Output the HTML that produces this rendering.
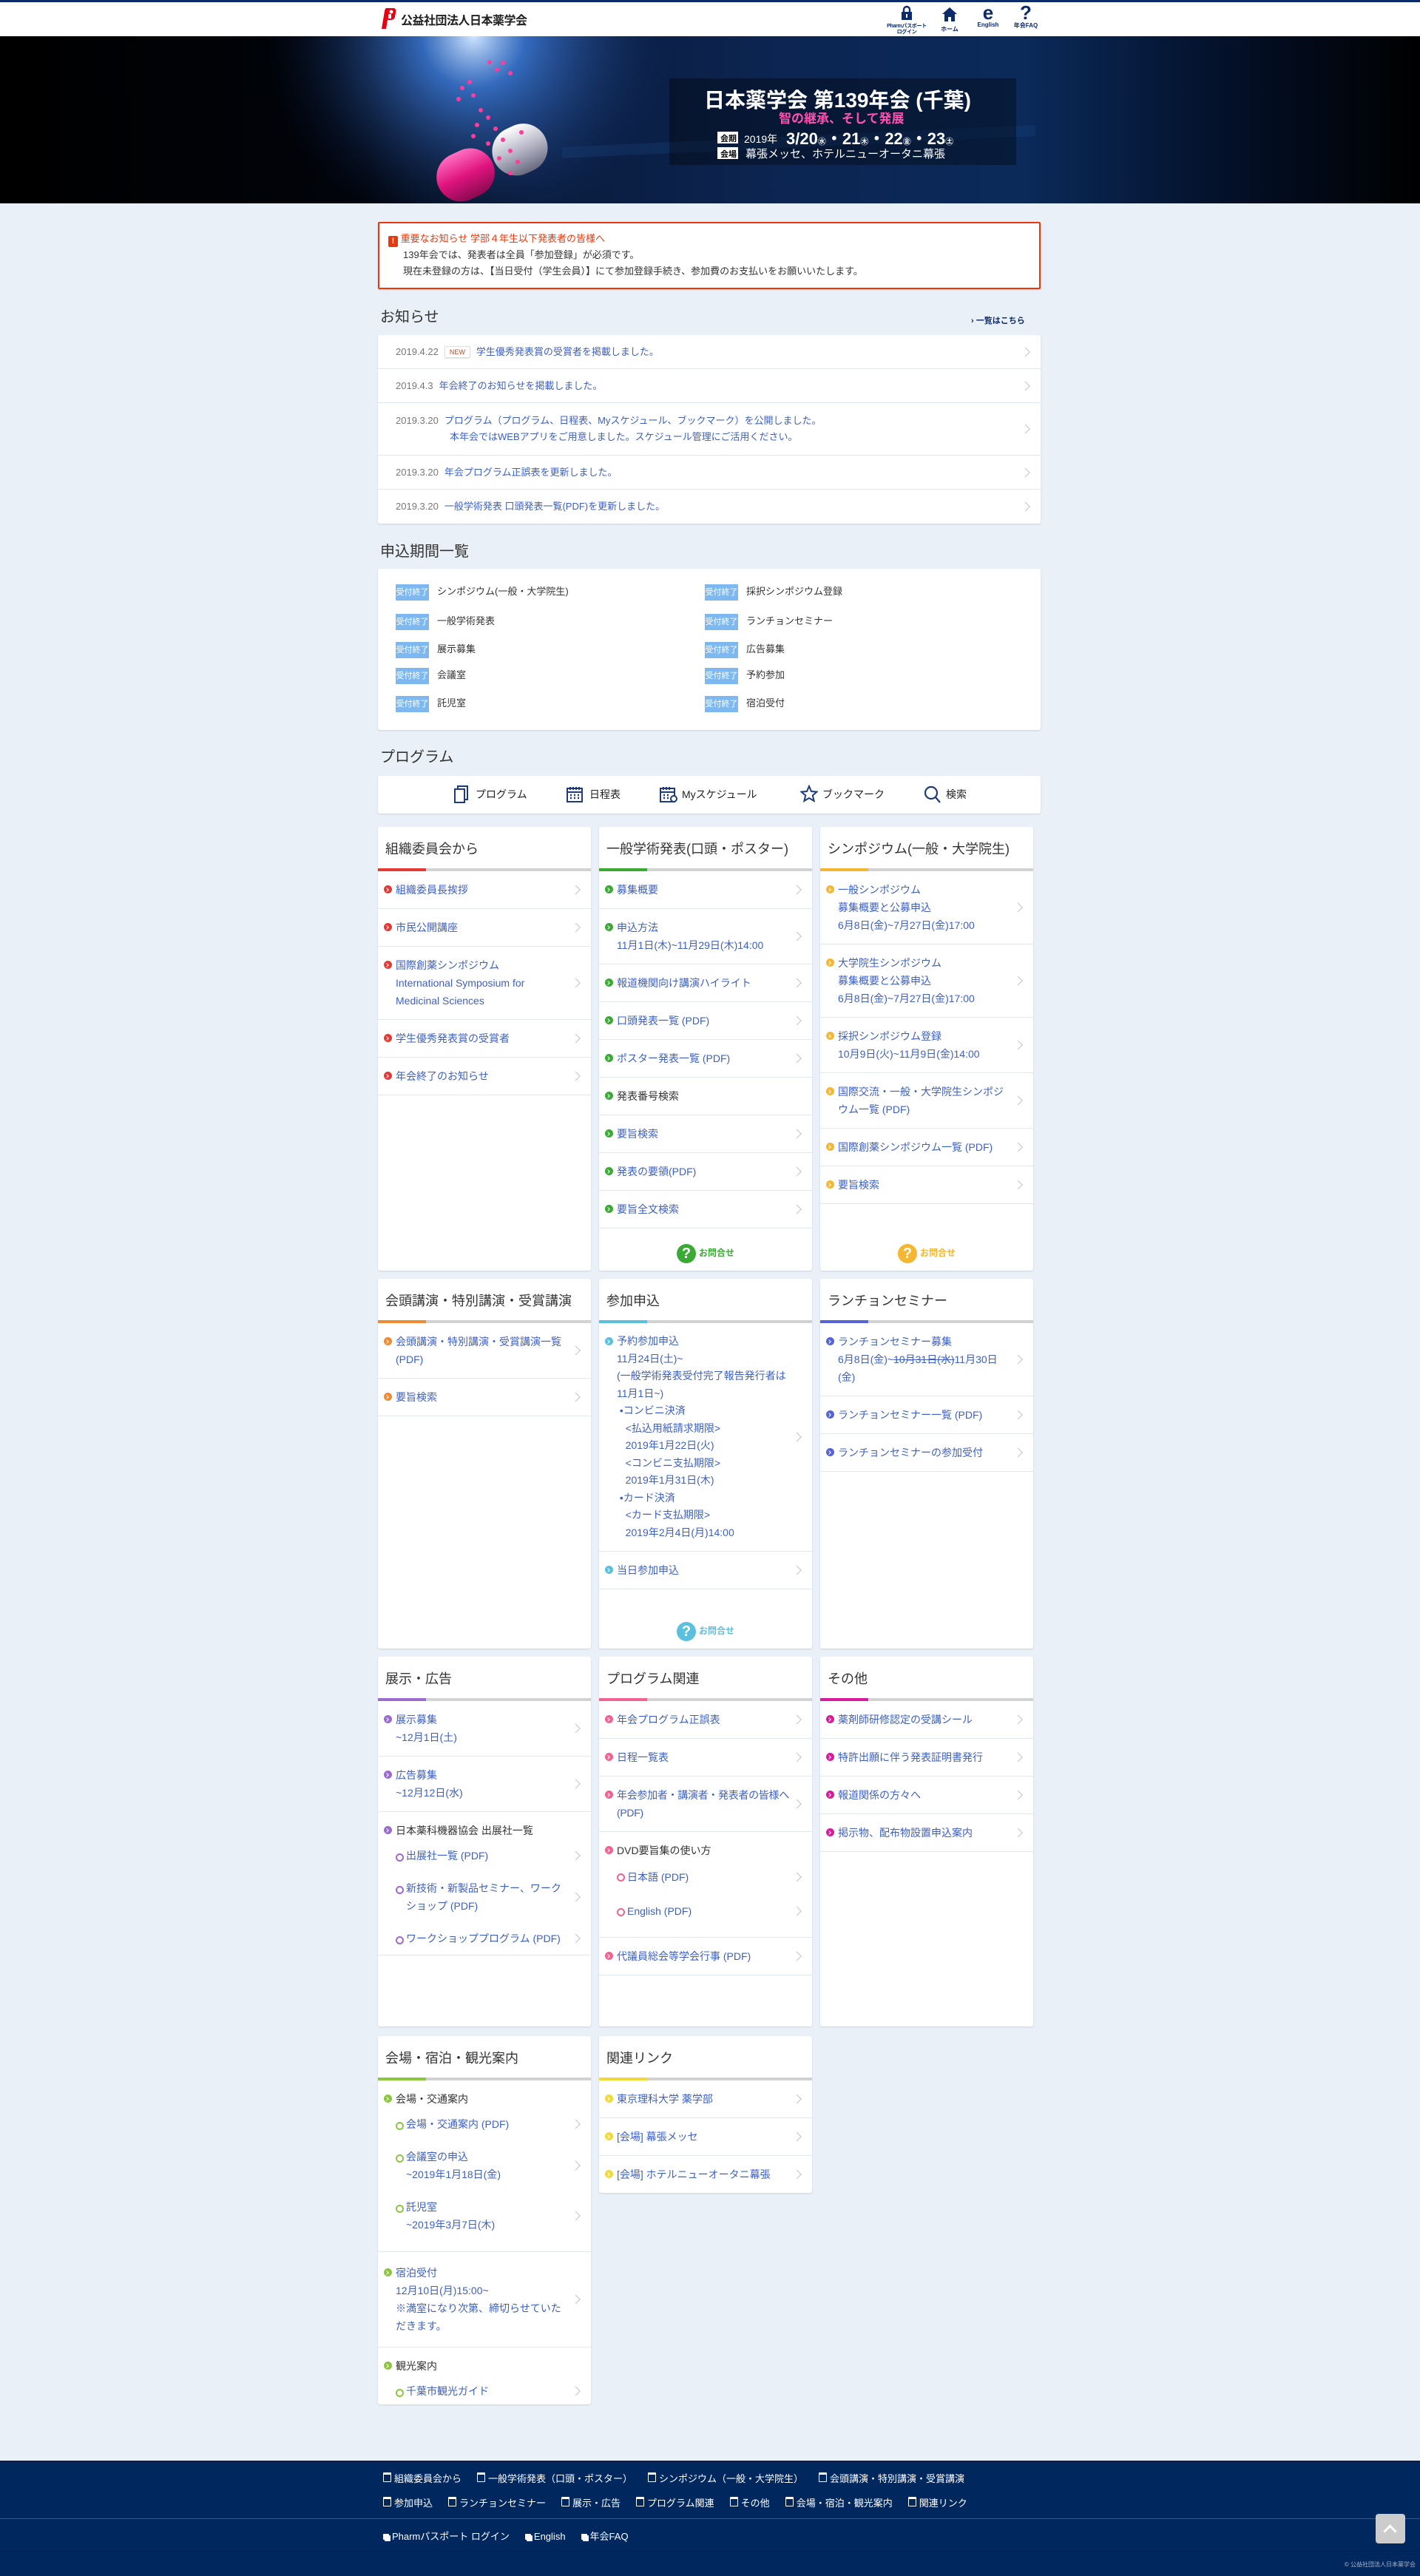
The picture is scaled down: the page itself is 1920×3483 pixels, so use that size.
<!DOCTYPE html>
<html lang="ja"><head><meta charset="utf-8">
<style>
*{box-sizing:border-box;margin:0;padding:0}
body{width:1920px;height:3483px;position:relative;background:#e9f0f7;font-family:"Liberation Sans","Noto Sans CJK JP",sans-serif;color:#333;overflow:hidden}
.abs{position:absolute}
#top{left:0;top:0;width:1920px;height:49px;background:#fff;border-top:3px solid #0c2b6b}
#banner{left:0;top:49px;width:1920px;height:226px;background:#000;overflow:hidden}
.box{background:#fff;box-shadow:0 1px 2px rgba(0,0,0,.12);border-radius:3px}
h2{position:absolute;font-weight:normal;font-size:20px;color:#333;left:514px}
.news{left:511px;top:453px;width:896px}
.news .r{position:relative;border-bottom:1px solid #e3e6ea;height:46px;padding:0 40px 0 24px;font-size:13px;line-height:46px;color:#3d5fc4}
.news .r:last-child{border-bottom:0}
.news .d{color:#777;margin-right:8px}
.news .r::after,.it::after{content:"";position:absolute;right:16px;top:50%;width:8px;height:8px;border-top:1px solid #c4c4c4;border-right:1px solid #c4c4c4;transform:translateY(-50%) rotate(45deg)}
.new{display:inline-block;border:1px solid #ddd;border-radius:2px;color:#e8380d;font-size:9px;line-height:14px;padding:0 6px;margin-right:8px;box-shadow:0 1px 1px rgba(0,0,0,.1);vertical-align:1px}
.card{position:absolute;width:288px;background:#fff;box-shadow:0 1px 2px rgba(0,0,0,.12);border-radius:3px}
.card .hd{height:60px;position:relative;font-size:18px;line-height:60px;padding-left:10px;color:#333;border-bottom:4px solid #d2d2d2;white-space:nowrap}
.card .hd::after{content:"";position:absolute;left:0;bottom:-4px;width:65px;height:4px;background:var(--c)}
.it{position:relative;border-bottom:1px solid #e3e6ea;padding:13px 30px 13px 24px;font-size:14px;line-height:24px;color:#3d5fc4}
.b{position:absolute;left:8px;top:19px;width:11px;height:11px;border-radius:50%;background:var(--c)}
.b::after{content:"";position:absolute;left:2px;top:3.5px;width:3px;height:3px;border-top:1.5px solid #fff;border-right:1.5px solid #fff;transform:rotate(45deg)}
.grp{position:relative;border-bottom:1px solid #e3e6ea;padding:13px 0 0 0;font-size:14px;line-height:24px}
.grp .lb{padding-left:24px;color:#333;position:relative}
.grp .lb .b{top:6px}
.sub{position:relative;padding:10px 30px 10px 38px;color:#3d5fc4}
.sub::before{content:"";position:absolute;left:24px;top:19px;width:7px;height:7px;border-radius:50%;border:2px solid var(--c)}
.sub::after{content:"";position:absolute;right:16px;top:50%;width:8px;height:8px;border-top:1px solid #c4c4c4;border-right:1px solid #c4c4c4;transform:translateY(-50%) rotate(45deg)}
.blk{color:#333}
.blk::after{display:none}
.ask{position:absolute;bottom:10px;left:0;width:100%;text-align:center;font-size:12px;font-weight:bold;color:var(--c);line-height:28px}
.ask i{display:inline-block;width:26px;height:26px;border-radius:50%;background:var(--c);color:#fff;font-style:normal;font-size:20px;line-height:26px;vertical-align:middle;margin-right:4px}
.badge{display:inline-block;width:45px;height:22px;background:#7db8f0;color:#fff;font-size:11px;line-height:22px;text-align:center;margin-right:11px}
.prow{position:absolute;font-size:13px;color:#333;line-height:22px}
.nav{position:absolute;font-size:14px;color:#222;line-height:20px;top:1064px}
#foot{left:0;top:3327px;width:1920px;height:156px;background:#00285f;border-top:2px solid #0c1e45}
.fl{position:absolute;left:518px;font-size:13px;color:#fff;white-space:nowrap}
.fl span{margin-right:21px}
.fl span::before{content:"";display:inline-block;width:9px;height:9px;border:1.5px solid #fff;border-top-width:3px;border-radius:1px;margin-right:4px;vertical-align:0}
.fl2 span::before{border:0;background:#fff;box-shadow:2px 2px 0 #fff;width:8px;height:8px}
</style></head><body>

<div id="top" class="abs">
  <svg class="abs" style="left:514px;top:6px" width="22" height="32" viewBox="0 0 22 32"><path d="M8 2 L18 2 Q22 2 21 8 L20 14 Q19 18 14 18 L10 18 L8 30 L2 30 L6 6 Q7 2 8 2Z" fill="#e60012"/><circle cx="15" cy="7" r="2.5" fill="#fff"/><rect x="11" y="10" width="4" height="6" fill="#fff"/></svg>
  <div class="abs" style="left:542px;top:11px;font-size:16px;font-weight:bold;color:#222;letter-spacing:-0.5px">公益社団法人日本薬学会</div>
  <div class="abs" style="left:1198px;top:4px;width:56px;text-align:center;color:#0c2b6b">
    <svg width="16" height="20" viewBox="0 0 16 20"><path d="M4 9V6a4 4 0 0 1 8 0v3" stroke="#0c2b6b" stroke-width="2.4" fill="none"/><rect x="1" y="9" width="14" height="11" fill="#0c2b6b"/><rect x="7" y="12" width="2" height="5" fill="#fff"/></svg>
    <div style="font-size:7px;line-height:8px;font-weight:bold;white-space:nowrap;letter-spacing:-0.3px">Pharmパスポート<br>ログイン</div></div>
  <div class="abs" style="left:1266px;top:6px;width:36px;text-align:center;color:#0c2b6b">
    <svg width="22" height="20" viewBox="0 0 22 20"><path d="M11 1 L1 10 H4 V20 H9 V14 H13 V20 H18 V10 H21Z" fill="#0c2b6b"/></svg>
    <div style="font-size:8px;font-weight:bold">ホーム</div></div>
  <div class="abs" style="left:1318px;top:2px;width:36px;text-align:center;color:#0c2b6b">
    <div style="font-size:26px;font-weight:bold;line-height:24px">e</div>
    <div style="font-size:8px;font-weight:bold">English</div></div>
  <div class="abs" style="left:1368px;top:2px;width:38px;text-align:center;color:#0c2b6b">
    <div style="font-size:26px;font-weight:bold;line-height:24px">?</div>
    <div style="font-size:8px;font-weight:bold">年会FAQ</div></div>
</div>

<div id="banner" class="abs">
<svg width="1920" height="226" viewBox="0 0 1920 226">
<defs>
<linearGradient id="bg" x1="0" x2="1"><stop offset="0" stop-color="#000"/><stop offset=".26" stop-color="#01040b"/><stop offset=".38" stop-color="#0a1b3c"/><stop offset=".55" stop-color="#0c2552"/><stop offset=".72" stop-color="#0b2a5a"/><stop offset=".86" stop-color="#04112a"/><stop offset="1" stop-color="#000"/></linearGradient>
<radialGradient id="glow" cx="640" cy="0" r="280" gradientUnits="userSpaceOnUse"><stop offset="0" stop-color="#cfe4ff"/><stop offset=".25" stop-color="#3f7fe0" stop-opacity=".8"/><stop offset="1" stop-color="#0a2050" stop-opacity="0"/></radialGradient>
<linearGradient id="pink" x1="0" y1="0" x2="0" y2="1"><stop offset="0" stop-color="#ff6fc0"/><stop offset=".5" stop-color="#e0147f"/><stop offset="1" stop-color="#8a0a50"/></linearGradient>
<linearGradient id="silv" x1="0" y1="0" x2="0" y2="1"><stop offset="0" stop-color="#fff"/><stop offset=".5" stop-color="#b8b8c8"/><stop offset="1" stop-color="#6a6a80"/></linearGradient>
</defs>
<rect width="1920" height="226" fill="url(#bg)"/>
<rect width="1920" height="226" fill="url(#glow)"/>
<path d="M760 150 L1400 120 L1400 135 L760 165Z" fill="#1b4a8a" opacity=".25"/>
<rect x="905" y="57" width="469" height="117" fill="#000" opacity=".35"/>
<g transform="rotate(-25 660 170)">
<rect x="585" y="140" width="80" height="66" rx="33" fill="url(#pink)"/>
<rect x="668" y="140" width="76" height="66" rx="33" fill="url(#silv)"/>
</g>
<g fill="#ff3c9a">
<circle cx="662" cy="35" r="3"/><circle cx="672" cy="45" r="3"/><circle cx="680" cy="36" r="3"/><circle cx="690" cy="50" r="3"/>
<circle cx="625" cy="70" r="3"/><circle cx="635" cy="62" r="3"/><circle cx="620" cy="85" r="3"/><circle cx="640" cy="80" r="3"/>
<circle cx="650" cy="100" r="3"/><circle cx="660" cy="110" r="3"/><circle cx="645" cy="120" r="3"/><circle cx="670" cy="125" r="3"/>
<circle cx="680" cy="140" r="3"/><circle cx="660" cy="145" r="3"/><circle cx="690" cy="155" r="3"/><circle cx="705" cy="130" r="3"/>
<circle cx="640" cy="135" r="3"/><circle cx="675" cy="165" r="3"/><circle cx="700" cy="170" r="3"/><circle cx="690" cy="185" r="3"/>
</g>
<text x="952" y="96" font-size="28" fill="#fff" font-family="Liberation Sans,Noto Sans CJK JP,sans-serif" font-weight="bold">日本薬学会 第139年会 (千葉)</text>
<text x="1053" y="117" font-size="17" fill="#ff4fb0" font-family="Noto Sans CJK JP,sans-serif" font-weight="bold">智の継承、そして発展</text>
<rect x="970" y="129" width="28" height="16" fill="#fff"/><text x="974" y="142" font-size="11" fill="#000" font-family="Noto Sans CJK JP,sans-serif" font-weight="bold">会期</text>
<text x="1006" y="144" font-size="14" fill="#fff" font-family="Liberation Sans,Noto Sans CJK JP,sans-serif">2019年</text>
<text x="1063" y="146" font-size="22" fill="#fff" font-family="Liberation Sans,Noto Sans CJK JP,sans-serif" font-weight="bold">3/20<tspan font-size="11">㊌</tspan>・21<tspan font-size="11">㊍</tspan>・22<tspan font-size="11">㊎</tspan>・23<tspan font-size="11">㊏</tspan></text>
<rect x="970" y="150" width="28" height="16" fill="#fff"/><text x="974" y="163" font-size="11" fill="#000" font-family="Noto Sans CJK JP,sans-serif" font-weight="bold">会場</text>
<text x="1008" y="164" font-size="15" fill="#fff" font-family="Noto Sans CJK JP,sans-serif">幕張メッセ、ホテルニューオータニ幕張</text>
</svg>
</div>

<div class="abs box" style="left:511px;top:300px;width:896px;height:91px;border:2px solid #e8380d;border-radius:2px;font-size:13px;line-height:22px;padding:10px 0 0 12px">
  <div style="color:#e8380d"><span style="display:inline-block;width:13px;height:15px;background:#e8380d;color:#fff;text-align:center;font-weight:bold;font-size:11px;line-height:15px;border-radius:2px;vertical-align:-2px">!</span> 重要なお知らせ 学部４年生以下発表者の皆様へ</div>
  <div style="padding-left:20px;color:#333">139年会では、発表者は全員「参加登録」が必須です。</div>
  <div style="padding-left:20px;color:#333">現在未登録の方は、【当日受付（学生会員）】にて参加登録手続き、参加費のお支払いをお願いいたします。</div>
</div>

<h2 style="top:412px">お知らせ</h2>
<div class="abs" style="left:1313px;top:425px;font-size:11px;font-weight:bold;color:#0c2b6b">› 一覧はこちら</div>
<div class="abs box news">
  <div class="r"><span class="d">2019.4.22</span><span class="new">NEW</span>学生優秀発表賞の受賞者を掲載しました。</div>
  <div class="r"><span class="d">2019.4.3</span>年会終了のお知らせを掲載しました。</div>
  <div class="r" style="height:71px;line-height:22px;padding-top:13px"><span class="d">2019.3.20</span>プログラム（プログラム、日程表、Myスケジュール、ブックマーク）を公開しました。<br><span style="padding-left:73px">本年会ではWEBアプリをご用意しました。スケジュール管理にご活用ください。</span></div>
  <div class="r"><span class="d">2019.3.20</span>年会プログラム正誤表を更新しました。</div>
  <div class="r"><span class="d">2019.3.20</span>一般学術発表 口頭発表一覧(PDF)を更新しました。</div>
</div>

<h2 style="top:729px">申込期間一覧</h2>
<div class="abs box" style="left:511px;top:769px;width:896px;height:218px"></div>
<div class="prow" style="left:535px;top:789px"><span class="badge">受付終了</span>シンポジウム(一般・大学院生)</div>
<div class="prow" style="left:535px;top:829px"><span class="badge">受付終了</span>一般学術発表</div>
<div class="prow" style="left:535px;top:867px"><span class="badge">受付終了</span>展示募集</div>
<div class="prow" style="left:535px;top:902px"><span class="badge">受付終了</span>会議室</div>
<div class="prow" style="left:535px;top:940px"><span class="badge">受付終了</span>託児室</div>
<div class="prow" style="left:953px;top:789px"><span class="badge">受付終了</span>採択シンポジウム登録</div>
<div class="prow" style="left:953px;top:829px"><span class="badge">受付終了</span>ランチョンセミナー</div>
<div class="prow" style="left:953px;top:867px"><span class="badge">受付終了</span>広告募集</div>
<div class="prow" style="left:953px;top:902px"><span class="badge">受付終了</span>予約参加</div>
<div class="prow" style="left:953px;top:940px"><span class="badge">受付終了</span>宿泊受付</div>

<h2 style="top:1007px">プログラム</h2>
<div class="abs box" style="left:511px;top:1049px;width:896px;height:51px"></div>
<svg class="abs" style="left:613px;top:1062px" width="22" height="24" viewBox="0 0 22 24" fill="none" stroke="#1d3a7a" stroke-width="2"><rect x="2" y="5" width="13" height="18"/><path d="M6 5V1h13v18h-4"/></svg>
<div class="nav" style="left:643px">プログラム</div>
<svg class="abs" style="left:766px;top:1063px" width="22" height="22" viewBox="0 0 22 22" fill="none" stroke="#1d3a7a" stroke-width="2"><rect x="1" y="3" width="20" height="18"/><path d="M1 8h20M5 1v4M9 1v4M13 1v4M17 1v4" /><path d="M5 12h2M10 12h2M15 12h2M5 16h2M10 16h2M15 16h2" stroke-width="2.5"/></svg>
<div class="nav" style="left:797px">日程表</div>
<svg class="abs" style="left:892px;top:1063px" width="24" height="22" viewBox="0 0 24 22" fill="none" stroke="#1d3a7a" stroke-width="2"><rect x="1" y="3" width="19" height="18"/><path d="M1 8h19M5 1v4M9 1v4M13 1v4"/><path d="M5 12h2M10 12h2M5 16h2M10 16h2" stroke-width="2.5"/><circle cx="19" cy="17" r="4" fill="#fff"/></svg>
<div class="nav" style="left:922px">Myスケジュール</div>
<svg class="abs" style="left:1082px;top:1061px" width="24" height="24" viewBox="0 0 24 24" fill="none" stroke="#1d3a7a" stroke-width="2"><path d="M12 2l3 7 7.5.6-5.7 4.9 1.8 7.4L12 18l-6.6 3.9 1.8-7.4L1.5 9.6 9 9z"/></svg>
<div class="nav" style="left:1112px">ブックマーク</div>
<svg class="abs" style="left:1249px;top:1062px" width="24" height="24" viewBox="0 0 24 24" fill="none" stroke="#1d3a7a" stroke-width="2.2"><circle cx="10" cy="10" r="8"/><path d="M16 16l6 7"/></svg>
<div class="nav" style="left:1279px">検索</div>

<!-- Row 1 -->
<div class="card" style="left:511px;top:1118px;height:600px;--c:#e53935">
  <div class="hd">組織委員会から</div>
  <div class="it"><i class="b"></i>組織委員長挨拶</div>
  <div class="it"><i class="b"></i>市民公開講座</div>
  <div class="it"><i class="b"></i>国際創薬シンポジウム<br>International Symposium for<br>Medicinal Sciences</div>
  <div class="it"><i class="b"></i>学生優秀発表賞の受賞者</div>
  <div class="it"><i class="b"></i>年会終了のお知らせ</div>
</div>
<div class="card" style="left:810px;top:1118px;height:600px;--c:#3aaa35">
  <div class="hd">一般学術発表(口頭・ポスター)</div>
  <div class="it"><i class="b"></i>募集概要</div>
  <div class="it"><i class="b"></i>申込方法<br>11月1日(木)~11月29日(木)14:00</div>
  <div class="it"><i class="b"></i>報道機関向け講演ハイライト</div>
  <div class="it"><i class="b"></i>口頭発表一覧 (PDF)</div>
  <div class="it"><i class="b"></i>ポスター発表一覧 (PDF)</div>
  <div class="it blk"><i class="b"></i>発表番号検索</div>
  <div class="it"><i class="b"></i>要旨検索</div>
  <div class="it"><i class="b"></i>発表の要領(PDF)</div>
  <div class="it"><i class="b"></i>要旨全文検索</div>
  <div class="ask"><i>?</i>お問合せ</div>
</div>
<div class="card" style="left:1109px;top:1118px;height:600px;--c:#f5b731">
  <div class="hd">シンポジウム(一般・大学院生)</div>
  <div class="it"><i class="b"></i>一般シンポジウム<br>募集概要と公募申込<br>6月8日(金)~7月27日(金)17:00</div>
  <div class="it"><i class="b"></i>大学院生シンポジウム<br>募集概要と公募申込<br>6月8日(金)~7月27日(金)17:00</div>
  <div class="it"><i class="b"></i>採択シンポジウム登録<br>10月9日(火)~11月9日(金)14:00</div>
  <div class="it"><i class="b"></i>国際交流・一般・大学院生シンポジウム一覧 (PDF)</div>
  <div class="it"><i class="b"></i>国際創薬シンポジウム一覧 (PDF)</div>
  <div class="it"><i class="b"></i>要旨検索</div>
  <div class="ask"><i>?</i>お問合せ</div>
</div>

<!-- Row 2 -->
<div class="card" style="left:511px;top:1729px;height:500px;--c:#f08a32">
  <div class="hd">会頭講演・特別講演・受賞講演</div>
  <div class="it"><i class="b"></i>会頭講演・特別講演・受賞講演一覧<br>(PDF)</div>
  <div class="it"><i class="b"></i>要旨検索</div>
</div>
<div class="card" style="left:810px;top:1729px;height:500px;--c:#5bc0de">
  <div class="hd">参加申込</div>
  <div class="it" style="line-height:23.5px"><i class="b"></i>予約参加申込<br>11月24日(土)~<br>(一般学術発表受付完了報告発行者は<br>11月1日~)<br>&nbsp;•コンビニ決済<br>&nbsp;&nbsp;&nbsp;&lt;払込用紙請求期限&gt;<br>&nbsp;&nbsp;&nbsp;2019年1月22日(火)<br>&nbsp;&nbsp;&nbsp;&lt;コンビニ支払期限&gt;<br>&nbsp;&nbsp;&nbsp;2019年1月31日(木)<br>&nbsp;•カード決済<br>&nbsp;&nbsp;&nbsp;&lt;カード支払期限&gt;<br>&nbsp;&nbsp;&nbsp;2019年2月4日(月)14:00</div>
  <div class="it"><i class="b"></i>当日参加申込</div>
  <div class="ask"><i>?</i>お問合せ</div>
</div>
<div class="card" style="left:1109px;top:1729px;height:500px;--c:#5563d6">
  <div class="hd">ランチョンセミナー</div>
  <div class="it"><i class="b"></i>ランチョンセミナー募集<br>6月8日(金)~<s>10月31日(水)</s>11月30日<br>(金)</div>
  <div class="it"><i class="b"></i>ランチョンセミナー一覧 (PDF)</div>
  <div class="it"><i class="b"></i>ランチョンセミナーの参加受付</div>
</div>

<!-- Row 3 -->
<div class="card" style="left:511px;top:2240px;height:500px;--c:#9c6ad0">
  <div class="hd">展示・広告</div>
  <div class="it"><i class="b"></i>展示募集<br>~12月1日(土)</div>
  <div class="it"><i class="b"></i>広告募集<br>~12月12日(水)</div>
  <div class="grp"><div class="lb"><i class="b"></i>日本薬科機器協会 出展社一覧</div>
    <div class="sub">出展社一覧 (PDF)</div>
    <div class="sub">新技術・新製品セミナー、ワークショップ (PDF)</div>
    <div class="sub">ワークショッププログラム (PDF)</div>
  </div>
</div>
<div class="card" style="left:810px;top:2240px;height:500px;--c:#f06292">
  <div class="hd">プログラム関連</div>
  <div class="it"><i class="b"></i>年会プログラム正誤表</div>
  <div class="it"><i class="b"></i>日程一覧表</div>
  <div class="it" style="padding-right:18px;white-space:nowrap;letter-spacing:-0.3px"><i class="b"></i>年会参加者・講演者・発表者の皆様へ<br>(PDF)</div>
  <div class="grp" style="padding-bottom:12px"><div class="lb"><i class="b"></i>DVD要旨集の使い方</div>
    <div class="sub" style="padding:12px 30px 11px 38px">日本語 (PDF)</div>
    <div class="sub" style="padding:11px 30px 11px 38px">English (PDF)</div>
  </div>
  <div class="it"><i class="b"></i>代議員総会等学会行事 (PDF)</div>
</div>
<div class="card" style="left:1109px;top:2240px;height:500px;--c:#d81b9c">
  <div class="hd">その他</div>
  <div class="it"><i class="b"></i>薬剤師研修認定の受講シール</div>
  <div class="it"><i class="b"></i>特許出願に伴う発表証明書発行</div>
  <div class="it"><i class="b"></i>報道関係の方々へ</div>
  <div class="it"><i class="b"></i>掲示物、配布物設置申込案内</div>
</div>

<!-- Row 4 -->
<div class="card" style="left:511px;top:2753px;height:498px;--c:#8dc63f">
  <div class="hd">会場・宿泊・観光案内</div>
  <div class="grp" style="padding-bottom:14px"><div class="lb"><i class="b"></i>会場・交通案内</div>
    <div class="sub">会場・交通案内 (PDF)</div>
    <div class="sub">会議室の申込<br>~2019年1月18日(金)</div>
    <div class="sub">託児室<br>~2019年3月7日(木)</div>
  </div>
  <div class="it" style="padding-top:16px;padding-bottom:16px"><i class="b" style="top:22px"></i>宿泊受付<br>12月10日(月)15:00~<br>※満室になり次第、締切らせていただきます。</div>
  <div class="grp" style="padding-bottom:8px;border-bottom:0"><div class="lb"><i class="b"></i>観光案内</div>
    <div class="sub">千葉市観光ガイド</div>
  </div>
</div>
<div class="card" style="left:810px;top:2753px;--c:#f2d93a">
  <div class="hd">関連リンク</div>
  <div class="it"><i class="b"></i>東京理科大学 薬学部</div>
  <div class="it"><i class="b"></i>[会場] 幕張メッセ</div>
  <div class="it" style="border-bottom:0"><i class="b"></i>[会場] ホテルニューオータニ幕張</div>
</div>

<div id="foot" class="abs">
  <div class="fl" style="top:12px"><span>組織委員会から</span><span>一般学術発表（口頭・ポスター）</span><span>シンポジウム（一般・大学院生）</span><span>会頭講演・特別講演・受賞講演</span></div>
  <div class="fl" style="top:45px"><span>参加申込</span><span>ランチョンセミナー</span><span>展示・広告</span><span>プログラム関連</span><span>その他</span><span>会場・宿泊・観光案内</span><span>関連リンク</span></div>
  <div class="abs" style="left:0;top:76px;width:1920px;height:1px;background:#3b5585"></div>
  <div class="fl fl2" style="top:90px"><span>Pharmパスポート ログイン</span><span>English</span><span>年会FAQ</span></div>
  <div class="abs" style="left:0;top:120px;width:1920px;height:1px;background:#0f1d3d"></div>
  <div class="abs" style="left:1860px;top:70px;width:40px;height:40px;background:#ccc;border-radius:4px"><div style="position:absolute;left:13px;top:17px;width:13px;height:13px;border-top:3px solid #fff;border-left:3px solid #fff;transform:rotate(45deg)"></div></div>
  <div class="abs" style="right:6px;top:133px;font-size:8px;color:#aab4c8">© 公益社団法人日本薬学会</div>
</div>
</body></html>
